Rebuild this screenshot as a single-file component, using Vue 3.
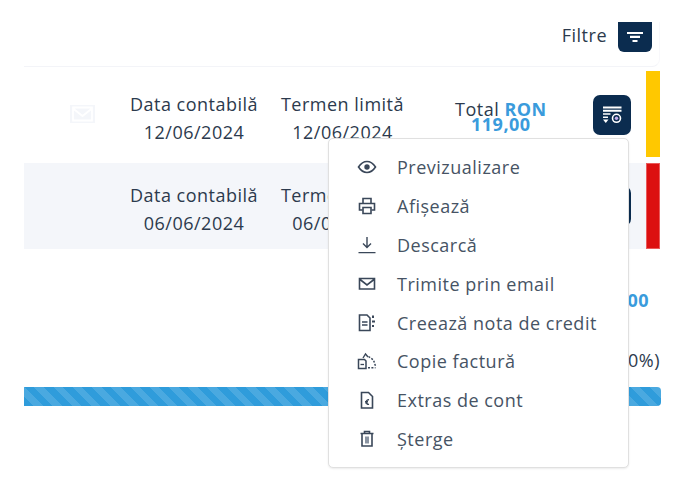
<script setup>
const rows = [
  { id: 1, date: '12/06/2024', due: '12/06/2024', amount: '119,00', bar: 'yellow', mail: true },
  { id: 2, date: '06/06/2024', due: '06/06/2024', amount: '', bar: 'red', mail: false }
]
const items = [
  { label: 'Previzualizare', icon: 'eye' },
  { label: 'Afișează', icon: 'print' },
  { label: 'Descarcă', icon: 'down' },
  { label: 'Trimite prin email', icon: 'mail' },
  { label: 'Creează nota de credit', icon: 'credit' },
  { label: 'Copie factură', icon: 'copy' },
  { label: 'Extras de cont', icon: 'extract' },
  { label: 'Șterge', icon: 'trash' }
]
</script>

<template>
  <div class="page">
    <header class="toolbar">
      <span class="filter-label">Filtre</span>
      <button class="filter-btn" aria-label="Filtre">
        <svg width="16" height="10" viewBox="0 0 16 10"><path d="M0 0h16v2H0zM3 3.800h10v2.200H3zM5.500 8h5v2h-5z" fill="#fff"/></svg>
      </button>
    </header>

    <section class="list">
      <div v-for="row in rows" :key="row.id" class="row" :class="`row-${row.bar}`">
        <div class="cells">
          <div class="mail-cell">
            <svg v-if="row.mail" width="25" height="18" viewBox="0 0 25 18"><rect width="25" height="18" fill="#f4f6fa"/><path d="M3 2.500h19v13H3zM3 3.500l9.500 7.500 9.500-7.500" fill="none" stroke="#fff" stroke-width="1.800"/></svg>
          </div>
          <div class="date-cell"><span>Data contabilă</span><span>{{ row.date }}</span></div>
          <div class="date-cell due"><span>Termen limită</span><span>{{ row.due }}</span></div>
          <div class="total-cell">
            <template v-if="row.amount">
              <div class="total-top">Total <b>RON</b></div>
              <div class="total-amount">{{ row.amount }}</div>
            </template>
          </div>
          <button class="action-btn" aria-label="Acțiuni">
            <svg width="19" height="18" viewBox="0 0 19 18">
              <path d="M0 .5h18.500v2H0zM0 3.800h18.500v2H0zM0 7.200h7.500v1.500H0zM0 10.500h5v1.500H0z" fill="#fff"/>
              <path d="M0 13.500h5.500L2.750 17z" fill="#fff"/>
              <circle cx="13.500" cy="12.300" r="4" fill="none" stroke="#fff" stroke-width="1.600"/>
              <circle cx="13.500" cy="12.300" r="1.700" fill="#c4aef0"/>
            </svg>
          </button>
        </div>
        <div class="status" :class="row.bar"></div>
      </div>
    </section>

    <div class="summary">
      <div class="sum-amount">119,00</div>
      <div class="sum-percent">(100%)</div>
    </div>
    <div class="progress"></div>

    <ul class="menu">
      <li v-for="item in items" :key="item.label" class="menu-item">
        <span class="ico">
          <svg width="20" height="20" viewBox="0 0 20 20" fill="none" stroke="#3a4759" stroke-width="1.600">
            <template v-if="item.icon === 'eye'">
              <path d="M1.500 10C4 6.200 7 4.500 10 4.500S16 6.200 18.500 10C16 13.800 13 15.500 10 15.500S4 13.800 1.500 10z"/>
              <circle cx="10" cy="10" r="2.700" fill="#3a4759" stroke="none"/>
            </template>
            <template v-else-if="item.icon === 'print'">
              <path d="M6 7V2.500h8V7M5.500 14H2.500V7.500h15V14h-3"/>
              <path d="M6 11.500h8V17.500H6z"/>
            </template>
            <template v-else-if="item.icon === 'down'">
              <path d="M10 2v10M6 8.500l4 4 4-4M1.500 17.600h17" stroke-width="1.400"/>
            </template>
            <template v-else-if="item.icon === 'mail'">
              <path d="M2.500 4.500h15v10.500h-15zM3 5.500l7 5.500 7-5.500"/>
            </template>
            <template v-else-if="item.icon === 'credit'">
              <path d="M2.500 2h7.500l3 3v12.500H2.500z"/>
              <path d="M5 9h5.500M5 12h5.500" />
              <path d="M16 2.500v2.500M15 8.500h3M16 12v2" stroke-width="2"/>
            </template>
            <template v-else-if="item.icon === 'copy'">
              <path d="M1.500 8.500h6L9 10v7.500H1.500z" stroke-width="1.500"/>
              <path d="M3.500 13.500h3.500" stroke-width="1.300"/>
              <path d="M6 7l2.500-4 2.500 3" stroke-width="1.400"/>
              <path d="M11.500 5.500l5 3.500 2 6M11 16.800h7.500" stroke-width="1.500" stroke-dasharray="2 1.400"/>
            </template>
            <template v-else-if="item.icon === 'extract'">
              <path d="M4.500 2.500h7l4 4V18H4.500z"/>
              <path d="M12 9.800a2.300 2.300 0 1 0 0 4.500" stroke-width="1.400"/>
              <path d="M8 11.500h3M8 12.900h3" stroke-width="1"/>
            </template>
            <template v-else>
              <path d="M3.500 4.500h13M7.500 4.500V2.500h5v2M5 4.500v12.500h10V4.500" />
              <path d="M8 7.500h4v7H8z" fill="#8a94a2" stroke="none"/>
            </template>
          </svg>
        </span>
        <span>{{ item.label }}</span>
      </li>
    </ul>
  </div>
</template>

<style scoped>
.page {
  position: relative;
  width: 683px;
  height: 492px;
  overflow: hidden;
  background: #fff;
  font-family: "Open Sans", sans-serif;
  font-size: 18px;
  letter-spacing: .5px;
  color: #2c3a4d;
  box-sizing: border-box;
  padding: 22px 23px 0 24px;
}
.toolbar {
  display: flex;
  justify-content: flex-end;
  align-items: flex-start;
  gap: 11px;
  height: 44px;
  padding-right: 7px;
  border-bottom: 1px solid #f3f4f8;
  border-right: 1px solid #f8f8fb;
  border-bottom-right-radius: 8px;
}
.filter-label {
  line-height: 27px;
}
.filter-btn {
  width: 34px;
  height: 30px;
  padding: 0 0 1px;
  border: 0;
  border-radius: 0 0 6px 6px;
  background: #0b2c4f;
  display: flex;
  align-items: center;
  justify-content: center;
}
.row {
  display: flex;
  height: 90px;
}
.row + .row {
  height: 86px;
  margin-top: 6px;
}
.row-red .cells {
  background: #f4f6fa;
  padding-top: 18px;
}
.cells {
  flex: 1;
  display: flex;
  align-items: flex-start;
  padding-top: 23px;
  box-sizing: border-box;
}
.status {
  width: 14px;
}
.yellow {
  height: 86px;
  margin-top: 4px;
  background: #ffc800;
}
.red {
  background: #dc1010;
  border: 1px solid #ea5a5a;
  box-sizing: border-box;
}
.mail-cell {
  width: 106px;
  padding: 14px 0 0 46px;
  box-sizing: border-box;
}
.date-cell {
  display: flex;
  flex-direction: column;
  align-items: center;
  width: 128px;
  line-height: 28px;
  white-space: nowrap;
}
.due {
  width: 125px;
  margin-left: 22px;
}
.total-cell {
  width: 123px;
  margin-left: 35px;
  padding: 10px 0 0 15px;
  box-sizing: border-box;
}
.total-top {
  line-height: 18px;
  white-space: nowrap;
}
.total-top b,
.total-amount {
  color: #3a9bdc;
  font-weight: 700;
}
.total-amount {
  line-height: 13px;
  padding-left: 16px;
}
.action-btn {
  width: 38px;
  height: 40px;
  margin: 5px 0 0 30px;
  padding: 0;
  border: 0;
  border-radius: 7px;
  background: #0b2c4f;
  display: flex;
  align-items: center;
  justify-content: center;
}
.summary {
  position: relative;
  height: 138px;
}
.sum-amount {
  position: absolute;
  right: 11px;
  top: 39px;
  color: #3a9bdc;
  font-weight: 700;
}
.sum-percent {
  position: absolute;
  right: 0;
  top: 99px;
}
.progress {
  height: 19px;
  margin-right: -1px;
  border-radius: 0 4px 4px 0;
  background: repeating-linear-gradient(45deg, #2f9cdb 0 6.800px, #4aa9e0 6.800px 13.600px);
}
.menu {
  position: absolute;
  left: 328px;
  top: 138px;
  width: 301px;
  height: 330px;
  margin: 0;
  padding: 8.500px 0 0;
  box-sizing: border-box;
  list-style: none;
  background: #fff;
  border: 1px solid #e0e0e0;
  border-radius: 5px;
  box-shadow: 0 1px 2px rgba(0, 0, 0, .08);
}
.menu-item {
  display: flex;
  align-items: center;
  height: 38.900px;
  padding-left: 28px;
  color: #465364;
  white-space: nowrap;
}
.ico {
  width: 40px;
  display: flex;
}
</style>
